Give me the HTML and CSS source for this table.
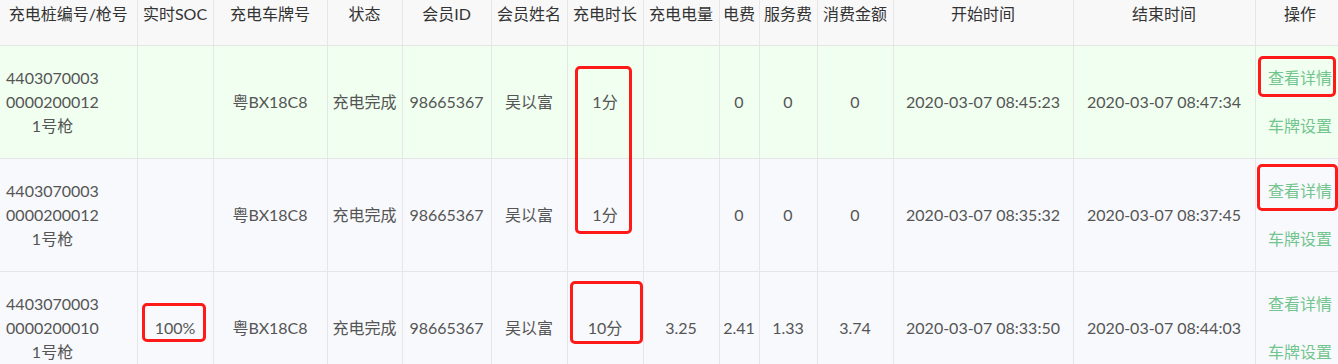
FILE: index.html
```html
<!DOCTYPE html>
<html lang="zh-CN">
<head>
<meta charset="utf-8">
<title>充电记录</title>
<link rel="stylesheet" href="styles.css">
</head>
<body>
<div class="page">
  <table class="grid">
    <colgroup>
      <col class="c1"><col class="c2"><col class="c3"><col class="c4"><col class="c5"><col class="c6"><col class="c7">
      <col class="c8"><col class="c9"><col class="c10"><col class="c11"><col class="c12"><col class="c13"><col class="c14">
    </colgroup>
    <thead>
      <tr>
        <th>充电桩编号/枪号</th><th>实时SOC</th><th>充电车牌号</th><th>状态</th><th>会员ID</th><th>会员姓名</th><th>充电时长</th>
        <th>充电电量</th><th>电费</th><th>服务费</th><th>消费金额</th><th>开始时间</th><th>结束时间</th><th>操作</th>
      </tr>
    </thead>
    <tbody>
      <tr class="hl">
        <td class="pile"><div class="pile-box"><span>4403070003</span><span>0000200012</span><span>1号枪</span></div></td>
        <td></td><td>粤BX18C8</td><td>充电完成</td><td>98665367</td><td>吴以富</td><td>1分</td>
        <td></td><td>0</td><td>0</td><td>0</td><td>2020-03-07 08:45:23</td><td>2020-03-07 08:47:34</td>
        <td><div class="ops"><a>查看详情</a><a>车牌设置</a></div></td>
      </tr>
      <tr>
        <td class="pile"><div class="pile-box"><span>4403070003</span><span>0000200012</span><span>1号枪</span></div></td>
        <td></td><td>粤BX18C8</td><td>充电完成</td><td>98665367</td><td>吴以富</td><td>1分</td>
        <td></td><td>0</td><td>0</td><td>0</td><td>2020-03-07 08:35:32</td><td>2020-03-07 08:37:45</td>
        <td><div class="ops"><a>查看详情</a><a>车牌设置</a></div></td>
      </tr>
      <tr>
        <td class="pile"><div class="pile-box"><span>4403070003</span><span>0000200010</span><span>1号枪</span></div></td>
        <td>100%</td><td>粤BX18C8</td><td>充电完成</td><td>98665367</td><td>吴以富</td><td>10分</td>
        <td>3.25</td><td>2.41</td><td>1.33</td><td>3.74</td><td>2020-03-07 08:33:50</td><td>2020-03-07 08:44:03</td>
        <td><div class="ops"><a>查看详情</a><a>车牌设置</a></div></td>
      </tr>
    </tbody>
  </table>
  <div class="mark mark-a"></div>
  <div class="mark mark-b"></div>
  <div class="mark mark-c"></div>
  <div class="mark mark-d"></div>
  <div class="mark mark-e"></div>
</div>
</body>
</html>
```
FILE: styles.css
```css
html, body {
  margin: 0;
  padding: 0;
  background: #ffffff;
  overflow: hidden;
}
.page {
  position: relative;
  width: 1338px;
  height: 364px;
  overflow: hidden;
  font-family: Lato, "Noto Sans CJK SC", sans-serif;
  font-size: 16px;
  color: #555555;
}
.grid {
  border-collapse: collapse;
  table-layout: fixed;
  width: 1345px;
}
.c1 { width: 137px; }
.c2 { width: 76px; }
.c3 { width: 114px; }
.c4 { width: 75px; }
.c5 { width: 89px; }
.c6 { width: 76px; }
.c7 { width: 76px; }
.c8 { width: 76px; }
.c9 { width: 40px; }
.c10 { width: 58px; }
.c11 { width: 76px; }
.c12 { width: 180px; }
.c13 { width: 182px; }
.c14 { width: 90px; }
.grid th, .grid td {
  border: 1px solid #e6e6e6;
  padding: 0;
  text-align: center;
  line-height: 24px;
  white-space: nowrap;
}
.grid th:first-child, .grid td:first-child { border-left: none; }
.grid thead tr { height: 45px; }
.grid th {
  vertical-align: top;
  padding-top: 2px;
  font-weight: normal;
  color: #333333;
  background: #f8f8f8;
  border-top: none;
}
.grid tbody tr { height: 113px; background: #f8f9fc; }
.grid tbody tr.hl { background: #f0fff0; }
.grid td { vertical-align: middle; }
.pile { text-align: left; }
.pile-box {
  margin-left: 5px;
  width: 95px;
  display: flex;
  flex-direction: column;
  align-items: center;
}
.ops {
  display: flex;
  flex-direction: column;
  align-items: center;
  gap: 24px;
}
.ops a { color: #72c58e; cursor: pointer; }
.mark {
  position: absolute;
  border: 3px solid #ff1a1a;
  border-radius: 5px;
  box-sizing: border-box;
}
.mark-a { left: 575px; top: 66px; width: 57px; height: 168px; }
.mark-b { left: 1258px; top: 56px; width: 78px; height: 41px; }
.mark-c { left: 1257px; top: 164px; width: 81px; height: 47px; }
.mark-d { left: 142px; top: 303px; width: 64px; height: 39px; }
.mark-e { left: 570px; top: 281px; width: 73px; height: 63px; }
```
